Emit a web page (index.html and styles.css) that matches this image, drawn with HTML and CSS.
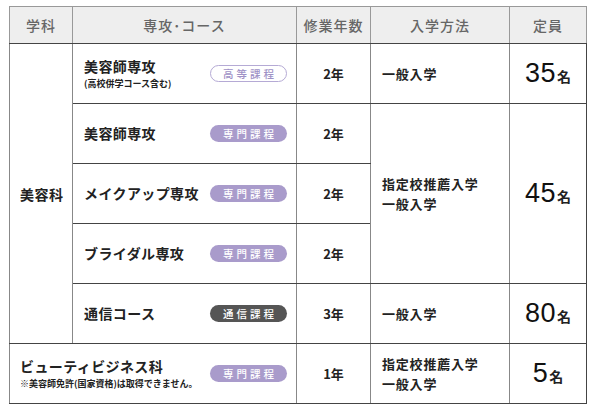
FILE: index.html
```html
<!DOCTYPE html>
<html lang="ja">
<head>
<meta charset="utf-8">
<link rel="stylesheet" href="styles.css">
</head>
<body>
<table class="courses">
  <colgroup>
    <col class="c-dept"><col class="c-course"><col class="c-years"><col class="c-entry"><col class="c-cap">
  </colgroup>
  <thead>
    <tr>
      <th>学科</th><th>専攻･コース</th><th>修業年数</th><th>入学方法</th><th>定員</th>
    </tr>
  </thead>
  <tbody>
    <tr>
      <td class="dept" rowspan="5">美容科</td>
      <td class="course">
        <div class="course-row">
          <div><div class="name">美容師専攻</div><div class="note">(高校併学コース含む)</div></div>
          <span class="badge outline">高等課程</span>
        </div>
      </td>
      <td class="years">2年</td>
      <td class="entry">一般入学</td>
      <td class="cap"><span class="num">35</span><span class="unit">名</span></td>
    </tr>
    <tr>
      <td class="course"><div class="course-row"><div class="name">美容師専攻</div><span class="badge">専門課程</span></div></td>
      <td class="years">2年</td>
      <td class="entry" rowspan="3">指定校推薦入学<br>一般入学</td>
      <td class="cap" rowspan="3"><span class="num">45</span><span class="unit">名</span></td>
    </tr>
    <tr>
      <td class="course"><div class="course-row"><div class="name">メイクアップ専攻</div><span class="badge">専門課程</span></div></td>
      <td class="years">2年</td>
    </tr>
    <tr>
      <td class="course"><div class="course-row"><div class="name">ブライダル専攻</div><span class="badge">専門課程</span></div></td>
      <td class="years">2年</td>
    </tr>
    <tr>
      <td class="course"><div class="course-row"><div class="name">通信コース</div><span class="badge dark">通信課程</span></div></td>
      <td class="years">3年</td>
      <td class="entry">一般入学</td>
      <td class="cap"><span class="num">80</span><span class="unit">名</span></td>
    </tr>
    <tr>
      <td class="course wide" colspan="2">
        <div class="course-row">
          <div><div class="name">ビューティビジネス科</div><div class="note">※美容師免許(国家資格)は取得できません。</div></div>
          <span class="badge">専門課程</span>
        </div>
      </td>
      <td class="years">1年</td>
      <td class="entry">指定校推薦入学<br>一般入学</td>
      <td class="cap"><span class="num">5</span><span class="unit">名</span></td>
    </tr>
  </tbody>
</table>
</body>
</html>
```
FILE: styles.css
```css
* { box-sizing: border-box; }
html, body { margin: 0; padding: 0; background: #fff; }
body {
  padding: 6px 0 0 9px;
  font-family: "Noto Sans CJK JP", "Noto Sans", sans-serif;
  color: #222;
}
.courses {
  border-collapse: collapse;
  table-layout: fixed;
  width: 577px;
  border: 1px solid #444;
}
.c-dept { width: 63px; }
.c-course { width: 224px; }
.c-years { width: 74px; }
.c-entry { width: 139px; }
.c-cap { width: 77px; }

th {
  height: 37px;
  background: #eeeeee;
  color: #666;
  font-size: 14px;
  font-weight: 500;
  letter-spacing: 1px;
  text-align: center;
  border: 1px solid #999;
  border-bottom: 1px solid #444;
  padding: 0;
}
td {
  height: 60px;
  border-top: 1px solid #444;
  border-bottom: 1px solid #444;
  border-left: 1px solid #888;
  border-right: 1px solid #888;
  padding: 0;
  vertical-align: middle;
  font-weight: 700;
  font-size: 13px;
}
.dept { padding-left: 10px; font-size: 14px; letter-spacing: 0.5px; }
.course { padding: 0 9px 0 11px; }
.course.wide { padding-left: 10px; }
.course-row {
  display: flex;
  align-items: center;
  justify-content: space-between;
}
.name { font-size: 14px; line-height: 19px; letter-spacing: 0.4px; }
.note { font-size: 9px; line-height: 13px; letter-spacing: 0; margin-top: 1px; }
.badge {
  flex: none;
  width: 77px;
  height: 17px;
  border-radius: 9px;
  background: #a99bcb;
  color: #fff;
  font-size: 10.5px;
  font-weight: 500;
  letter-spacing: 3px;
  text-indent: 3px;
  display: flex;
  align-items: center;
  justify-content: center;
}
.badge.outline {
  background: #fff;
  color: #9e91c6;
  border: 1px solid #b5aad5;
}
.badge.dark { background: #555; }
.years { text-align: center; font-size: 13px; }
.entry { padding-left: 11px; font-size: 13px; line-height: 20px; letter-spacing: 0.8px; }
.cap { text-align: center; border-right-color: #444; }
.num {
  font-family: "Liberation Sans", Arial, sans-serif;
  font-weight: 400;
  font-size: 27px;
  letter-spacing: 0.5px;
  color: #111;
}
.unit { font-size: 14px; margin-left: 1px; }
```
